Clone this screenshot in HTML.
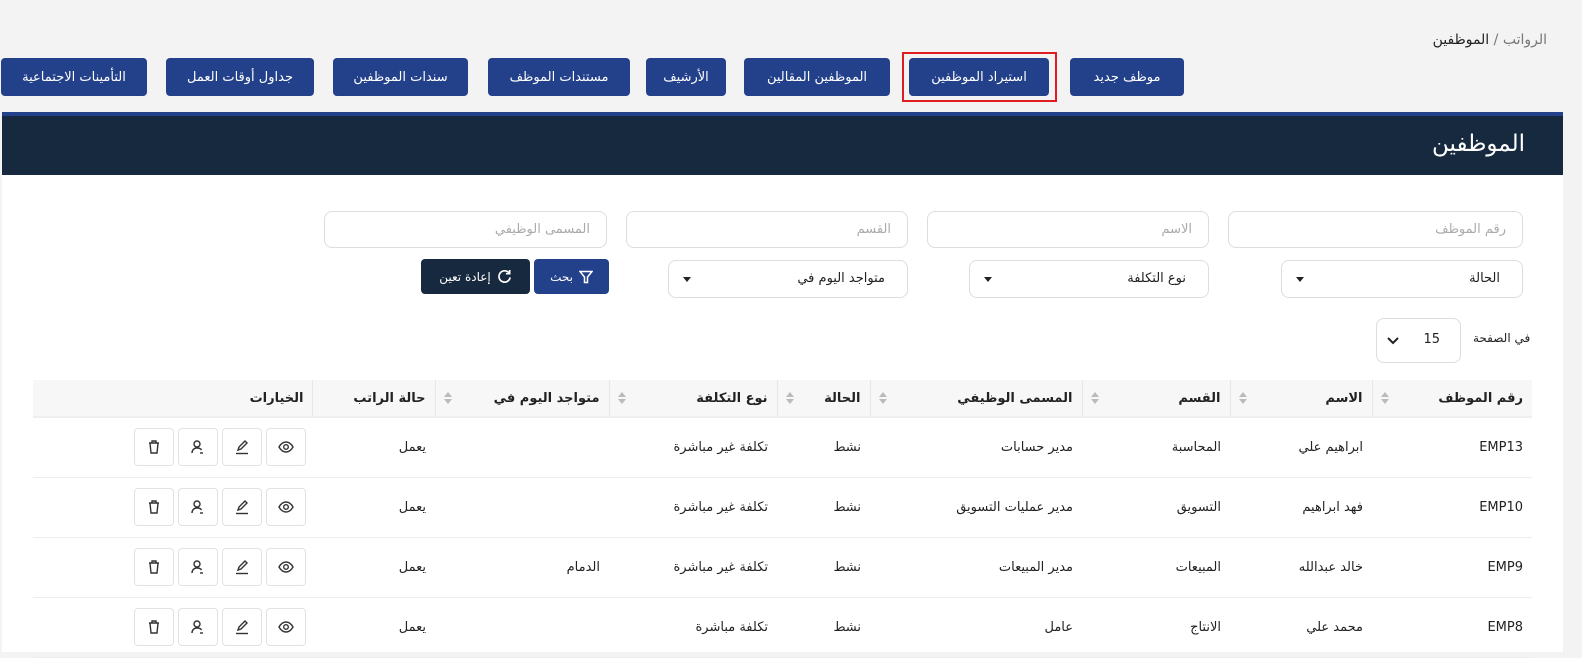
<!DOCTYPE html>
<html lang="ar" dir="rtl"><head><meta charset="utf-8">
<style>
*{box-sizing:border-box;margin:0;padding:0}
body{width:1582px;height:646px;overflow:hidden;background:#f3f3f3;font-family:"DejaVu Sans","Liberation Sans",sans-serif;color:#222;position:relative;direction:rtl}
.abs{position:absolute}
.bc{right:35px;top:32px;font-size:14px;color:#777}
.bc b{color:#222;font-weight:normal}
.tb{position:absolute;top:58px;height:38px;background:#23418a;color:#fff;border-radius:4px;font-size:13px;display:flex;align-items:center;justify-content:center}
.red{position:absolute;left:902px;top:52px;width:155px;height:50px;border:2px solid #e11b22}
.card{position:absolute;left:2px;top:112px;width:1561px;height:540px;background:#fff;border-top:4px solid #23418a}
.hd{height:59px;background:#16293f;color:#fff;font-size:23px;padding-right:38px;line-height:57px}
.inp{position:absolute;height:37px;border:1px solid #ddd;border-radius:8px;background:#fff;font-size:13px;color:#aaa;padding-right:16px;line-height:35px}
.sel{position:absolute;height:38px;border:1px solid #ddd;border-radius:8px;background:#fff;font-size:13px;color:#222;padding-right:22px;line-height:36px}
.sel:after{content:"";position:absolute;left:14px;top:16px;border:4px solid transparent;border-top:5px solid #222}
.btn{position:absolute;top:259px;height:35px;border-radius:4px;color:#fff;font-size:12px;display:flex;align-items:center;justify-content:center;gap:6px}
table{position:absolute;left:33px;top:380px;width:1499px;border-collapse:collapse;table-layout:fixed;font-size:13px}
th{background:#f7f7f7;height:37px;text-align:right;padding-right:9px;font-weight:bold;font-size:13px;position:relative;border-left:1px solid #e6e6e6;border-bottom:2px solid #eee}
th:last-child{border-left:none}
th .s{position:absolute;left:8px;top:12px;width:8px;height:13px}
th .s:before{content:"";position:absolute;left:0;top:0;border:4px solid transparent;border-bottom:5px solid #bbb;border-top:0}
th .s:after{content:"";position:absolute;left:0;top:7px;border:4px solid transparent;border-top:5px solid #bbb;border-bottom:0}
td{height:60px;border-bottom:1px solid #eee;text-align:right;padding-right:9px;color:#222}
td.a{padding-right:6px}
.ac{display:flex;gap:4px;justify-content:flex-start}
.ib{width:40px;height:38px;border:1px solid #e2e2e2;border-radius:4px;display:flex;align-items:center;justify-content:center}
</style></head><body>
<div class="abs bc">الرواتب / <b>الموظفين</b></div>
<div class="tb" style="left:1070px;width:114px">موظف جديد</div>
<div class="red"></div>
<div class="tb" style="left:909px;width:140px">استيراد الموظفين</div>
<div class="tb" style="left:744px;width:146px">الموظفين المقالين</div>
<div class="tb" style="left:646px;width:80px">الأرشيف</div>
<div class="tb" style="left:488px;width:142px">مستندات الموظف</div>
<div class="tb" style="left:333px;width:135px">سندات الموظفين</div>
<div class="tb" style="left:166px;width:148px">جداول أوقات العمل</div>
<div class="tb" style="left:1px;width:146px">التأمينات الاجتماعية</div>
<div class="card"><div class="hd">الموظفين</div></div>
<div class="inp" style="left:1228px;top:211px;width:295px">رقم الموظف</div>
<div class="inp" style="left:927px;top:211px;width:282px">الاسم</div>
<div class="inp" style="left:626px;top:211px;width:282px">القسم</div>
<div class="inp" style="left:324px;top:211px;width:283px">المسمى الوظيفي</div>
<div class="sel" style="left:1281px;top:260px;width:242px">الحالة</div>
<div class="sel" style="left:969px;top:260px;width:240px">نوع التكلفة</div>
<div class="sel" style="left:668px;top:260px;width:240px">متواجد اليوم في</div>
<div class="btn" style="left:534px;width:75px;background:#23418a"><svg width="14" height="14" viewBox="0 0 14 14" fill="none" stroke="#fff" stroke-width="1.5"><path d="M1 1.5h12L8.5 7v5.5h-3V7z"/></svg>بحث</div>
<div class="btn" style="left:421px;width:109px;background:#16293f"><svg width="15" height="15" viewBox="0 0 16 16" fill="none" stroke="#fff" stroke-width="1.8"><path d="M13 4.5A6 6 0 1 0 14 9"/><path d="M13.5 1v4h-4" /></svg>إعادة تعين</div>
<div class="abs" style="left:1376px;top:318px;width:85px;height:45px;border:1px solid #ddd;border-radius:8px;background:#fff;font-size:13px"><span class="abs" style="right:20px;top:13px">15</span><svg class="abs" style="left:10px;top:17px" width="12" height="9" viewBox="0 0 12 9" fill="none" stroke="#222" stroke-width="2"><path d="M1 2l5 5 5-5"/></svg></div>
<div class="abs" style="left:1473px;top:331px;font-size:12px">في الصفحة</div>
<table>
<colgroup><col style="width:160px"><col style="width:142px"><col style="width:148px"><col style="width:212px"><col style="width:93px"><col style="width:168px"><col style="width:174px"><col style="width:123px"><col style="width:279px"></colgroup>
<tr><th>رقم الموظف<i class="s"></i></th><th>الاسم<i class="s"></i></th><th>القسم<i class="s"></i></th><th>المسمى الوظيفي<i class="s"></i></th><th>الحالة<i class="s"></i></th><th>نوع التكلفة<i class="s"></i></th><th>متواجد اليوم في<i class="s"></i></th><th>حالة الراتب</th><th style="padding-right:8px">الخيارات</th></tr>
<tr><td>EMP13</td><td>ابراهيم علي</td><td>المحاسبة</td><td>مدير حسابات</td><td>نشط</td><td>تكلفة غير مباشرة</td><td></td><td>يعمل</td><td class="a"><div class="ac"></div></td></tr>
<tr><td>EMP10</td><td>فهد ابراهيم</td><td>التسويق</td><td>مدير عمليات التسويق</td><td>نشط</td><td>تكلفة غير مباشرة</td><td></td><td>يعمل</td><td class="a"><div class="ac"></div></td></tr>
<tr><td>EMP9</td><td>خالد عبدالله</td><td>المبيعات</td><td>مدير المبيعات</td><td>نشط</td><td>تكلفة غير مباشرة</td><td>الدمام</td><td>يعمل</td><td class="a"><div class="ac"></div></td></tr>
<tr><td>EMP8</td><td>محمد علي</td><td>الانتاج</td><td>عامل</td><td>نشط</td><td>تكلفة مباشرة</td><td></td><td>يعمل</td><td class="a"><div class="ac"></div></td></tr>
</table>
<script>
var h='<div class="ib"><svg width="16" height="12" viewBox="0 0 16 12" fill="none" stroke="#333" stroke-width="1.4"><path d="M1 6C3 2.5 5.5 1 8 1s5 1.5 7 5c-2 3.5-4.5 5-7 5S3 9.5 1 6z"/><circle cx="8" cy="6" r="2.3"/></svg></div>'+
'<div class="ib"><svg width="16" height="16" viewBox="0 0 16 16" fill="none" stroke="#333" stroke-width="1.4"><path d="M4 11l1-3 6-6 2 2-6 6z"/><path d="M2 14.5h12"/></svg></div>'+
'<div class="ib"><svg width="16" height="16" viewBox="0 0 16 16" fill="none" stroke="#333" stroke-width="1.4"><circle cx="7" cy="5" r="3"/><path d="M2 14c0-3 2-5 5-5s4 1 4.5 2"/><path d="M10 14h3"/></svg></div>'+
'<div class="ib"><svg width="14" height="16" viewBox="0 0 14 16" fill="none" stroke="#333" stroke-width="1.4"><path d="M2 4h10M5 4V2h4v2M3 4l1 10h6l1-10"/></svg></div>';
document.querySelectorAll('.ac').forEach(function(e){e.innerHTML=h});
</script>
</body></html>
